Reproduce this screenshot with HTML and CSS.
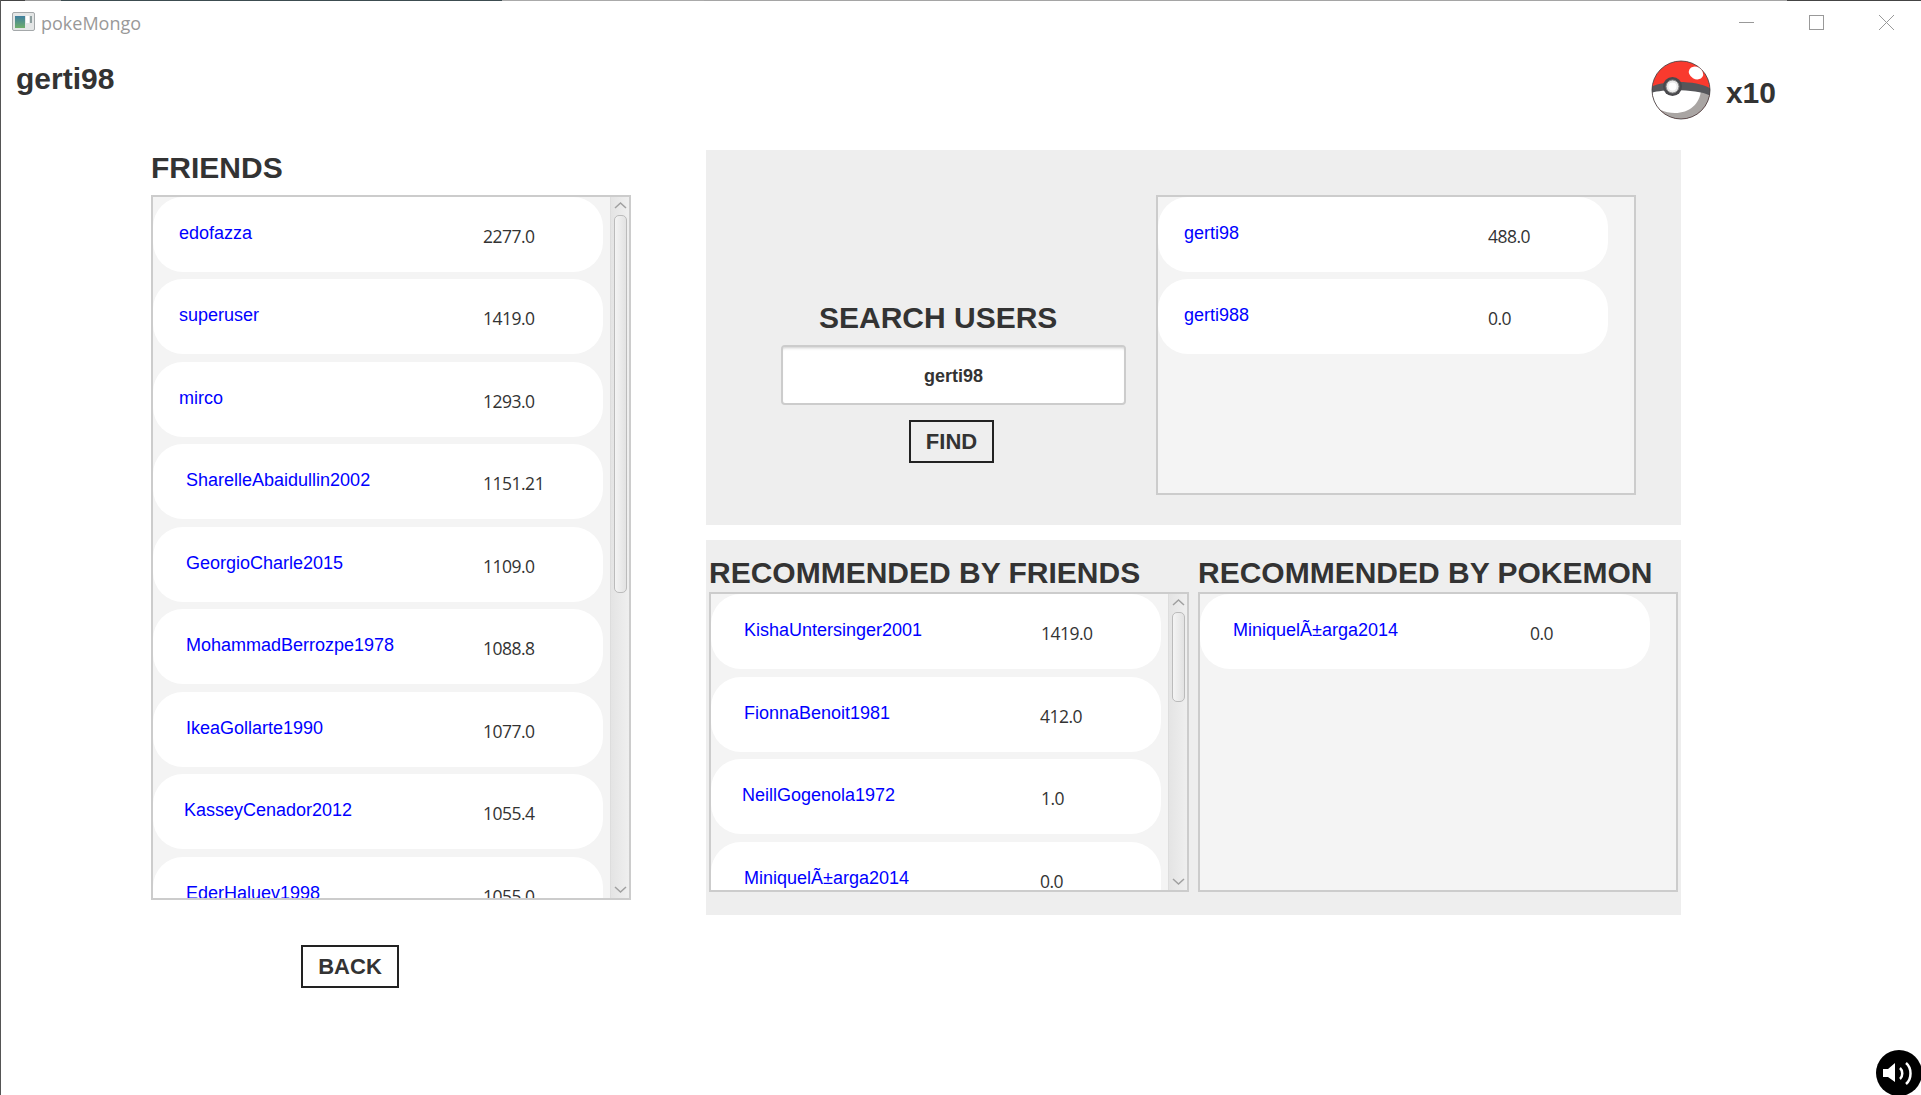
FILE: index.html
```html
<!DOCTYPE html>
<html>
<head>
  <title>pokeMongo</title>
  <link rel="stylesheet" href="styles.css">
</head>
<body>
  <div class="window">
    <div class="topline"></div>
    <div class="titlebar">
      <div class="title">
        <svg class="app-icon" width="23" height="19" viewBox="0 0 23 19">
          <defs>
            <linearGradient id="iconFill" x1="0" y1="0" x2="0" y2="1">
              <stop offset="0" stop-color="#3f7fa0"/>
              <stop offset="1" stop-color="#6fae6a"/>
            </linearGradient>
          </defs>
          <rect x="0.5" y="0.5" width="22" height="18" rx="1.5" fill="#e4e6e6" stroke="#a4a8aa"/>
          <rect x="3" y="4" width="10" height="12" fill="url(#iconFill)"/>
          <rect x="14" y="4" width="3" height="7" fill="#ffffff"/>
          <rect x="18" y="4" width="2" height="7" fill="#8fa0a0"/>
        </svg>
        <span>pokeMongo</span>
      </div>
      <div class="controls">
        <div class="control">
          <svg width="15" height="15" viewBox="0 0 15 15"><path d="M0 7.5H15" stroke="#999" fill="none"/></svg>
        </div>
        <div class="control">
          <svg width="15" height="15" viewBox="0 0 15 15"><rect x="0.5" y="0.5" width="14" height="14" stroke="#999" fill="none"/></svg>
        </div>
        <div class="control">
          <svg width="15" height="15" viewBox="0 0 15 15"><path d="M0 0L15 15M15 0L0 15" stroke="#999" fill="none"/></svg>
        </div>
      </div>
    </div>

    <div class="header">
      <div class="username">gerti98</div>
      <div class="balance">
        <svg width="60" height="60" viewBox="0 0 60 60">
          <defs>
            <clipPath id="ballClip"><circle cx="30" cy="30" r="29"/></clipPath>
          </defs>
          <g clip-path="url(#ballClip)">
            <rect width="60" height="60" fill="#f93a2e"/>
            <rect y="30" width="60" height="30" fill="#a9a5a3"/>
            <path d="M0 30H50C49 44 38 53 24 53C12 53 2 48 0 38Z" fill="#ffffff"/>
            <path d="M0 27C12 20 48 20 60 29V36C48 29 12 29 0 33Z" fill="#55565a"/>
          </g>
          <circle cx="30" cy="30" r="29" fill="none" stroke="#3c3a3c" stroke-width="0.8"/>
          <ellipse cx="45" cy="13" rx="7.5" ry="6" transform="rotate(30 45 13)" fill="#ffffff"/>
          <circle cx="21.5" cy="26.5" r="9.5" fill="#49494d"/>
          <circle cx="21.5" cy="26.5" r="6.5" fill="#e8e8e8" stroke="#888"/>
          <circle cx="21.5" cy="26.5" r="4" fill="#ffffff"/>
        </svg>
        <span class="count">x10</span>
      </div>
    </div>

    <div class="main">
      <div class="friends-col">
        <h2>FRIENDS</h2>
        <div class="list list-friends">
          <div class="rows">
            <div class="row"><span class="name">edofazza</span><span class="score">2277.0</span></div>
            <div class="row"><span class="name">superuser</span><span class="score">1419.0</span></div>
            <div class="row"><span class="name">mirco</span><span class="score">1293.0</span></div>
            <div class="row"><span class="name far">SharelleAbaidullin2002</span><span class="score">1151.21</span></div>
            <div class="row"><span class="name far">GeorgioCharle2015</span><span class="score">1109.0</span></div>
            <div class="row"><span class="name far">MohammadBerrozpe1978</span><span class="score">1088.8</span></div>
            <div class="row"><span class="name far">IkeaGollarte1990</span><span class="score">1077.0</span></div>
            <div class="row"><span class="name mid">KasseyCenador2012</span><span class="score">1055.4</span></div>
            <div class="row"><span class="name far">EderHaluev1998</span><span class="score">1055.0</span></div>
          </div>
          <div class="scrollbar">
            <svg class="arrow" width="19" height="18" viewBox="0 0 19 18"><path d="M4 11L9.5 6L15 11" stroke="#a0a0a0" stroke-width="1.5" fill="none"/></svg>
            <div class="thumb thumb-friends"></div>
            <svg class="arrow arrow-down" width="19" height="18" viewBox="0 0 19 18"><path d="M4 7L9.5 12L15 7" stroke="#a0a0a0" stroke-width="1.5" fill="none"/></svg>
          </div>
        </div>
        <button class="btn btn-back">BACK</button>
      </div>

      <div class="right-col">
        <div class="panel panel-search">
          <div class="search-form">
            <h2 class="search-title">SEARCH USERS</h2>
            <input class="search-input" type="text" value="gerti98">
            <button class="btn btn-find">FIND</button>
          </div>
          <div class="list list-results">
            <div class="rows">
              <div class="row"><span class="name">gerti98</span><span class="score">488.0</span></div>
              <div class="row"><span class="name">gerti988</span><span class="score">0.0</span></div>
            </div>
          </div>
        </div>

        <div class="panel panel-recommended">
          <div class="rec-col">
            <h2>RECOMMENDED BY FRIENDS</h2>
            <div class="list list-rec">
              <div class="rows">
                <div class="row"><span class="name far">KishaUntersinger2001</span><span class="score">1419.0</span></div>
                <div class="row"><span class="name far">FionnaBenoit1981</span><span class="score back">412.0</span></div>
                <div class="row"><span class="name mid">NeillGogenola1972</span><span class="score">1.0</span></div>
                <div class="row"><span class="name far">MiniquelÃ±arga2014</span><span class="score back">0.0</span></div>
              </div>
              <div class="scrollbar">
                <svg class="arrow" width="19" height="18" viewBox="0 0 19 18"><path d="M4 11L9.5 6L15 11" stroke="#a0a0a0" stroke-width="1.5" fill="none"/></svg>
                <div class="thumb thumb-rec"></div>
                <svg class="arrow arrow-down" width="19" height="18" viewBox="0 0 19 18"><path d="M4 7L9.5 12L15 7" stroke="#a0a0a0" stroke-width="1.5" fill="none"/></svg>
              </div>
            </div>
          </div>
          <div class="rec-col">
            <h2>RECOMMENDED BY POKEMON</h2>
            <div class="list list-rec">
              <div class="rows">
                <div class="row"><span class="name far">MiniquelÃ±arga2014</span><span class="score">0.0</span></div>
              </div>
            </div>
          </div>
        </div>
      </div>
    </div>

    <div class="sound">
      <svg width="45" height="45" viewBox="0 0 45 45">
        <circle cx="23" cy="23" r="23" fill="#000"/>
        <path d="M7 19H12L19 13V32L12 27H7Z" fill="#fff"/>
        <path d="M24 18C27 20.5 27 26.5 24 29M30 13C36 18 36 29 30 34" stroke="#fff" stroke-width="2.5" fill="none"/>
      </svg>
    </div>
  </div>
</body>
</html>
```

FILE: styles.css
```css
* {
  box-sizing: border-box;
}

html, body {
  margin: 0;
  padding: 0;
  height: 100%;
  overflow: hidden;
  background: #fff;
}

body {
  font-family: "Liberation Sans", Arial, sans-serif;
  color: #333;
}

h2 {
  margin: 0;
  font-size: 30px;
  line-height: 36px;
  font-weight: bold;
  white-space: nowrap;
}

.window {
  position: relative;
  height: 1095px;
  border-left: 1px solid #555;
  overflow: hidden;
}

/* whatever was behind the window shows through along the top edge */
.topline {
  height: 1px;
  background: linear-gradient(90deg, #444 0 24px, #999 24px 60px, #3c4c50 60px 501px, #aaa 501px 703px, #a5a5a5 703px 1786px, #444 1786px);
}

/* title bar */
.titlebar {
  display: flex;
  justify-content: space-between;
  height: 35px;
  padding-top: 11px;
}

.title {
  display: flex;
  align-items: center;
  gap: 6px;
  height: 19px;
  margin-left: 11px;
  font-family: "Open Sans", sans-serif;
  font-size: 18px;
  color: #999;
}

.title span {
  padding-top: 2px;
}

.controls {
  display: flex;
  margin-top: 3px;
}

.control {
  display: flex;
  justify-content: center;
  width: 70px;
}

/* user + pokeballs */
.header {
  display: flex;
  justify-content: space-between;
  height: 114px;
}

.username {
  margin: 25px 0 0 15px;
  font-size: 30px;
  line-height: 36px;
  font-weight: bold;
}

.balance {
  display: flex;
  gap: 15px;
  height: 60px;
  margin: 24px 145px 0 0;
}

.count {
  padding-top: 15px;
  font-size: 30px;
  line-height: 36px;
  font-weight: bold;
}

/* page columns */
.main {
  display: flex;
  gap: 75px;
  padding-left: 150px;
}

.friends-col {
  width: 480px;
}

.friends-col h2 {
  margin-bottom: 9px;
}

.right-col {
  display: flex;
  flex-direction: column;
  gap: 15px;
  width: 975px;
}

.panel {
  display: flex;
  height: 375px;
  background: #eee;
}

.panel-search {
  gap: 30px;
  padding: 45px 0 0 75px;
}

.panel-recommended {
  gap: 9px;
  padding: 15px 0 0 3px;
}

/* lists */
.list {
  display: flex;
  border: 2px solid #ccc;
  background: #f4f4f4;
  overflow: hidden;
}

.list-friends {
  width: 480px;
  height: 705px;
}

.list-results {
  width: 480px;
  height: 300px;
}

.list-rec {
  width: 480px;
  height: 300px;
}

.rows {
  display: flex;
  flex-direction: column;
  flex: 1;
  gap: 7.5px;
  overflow: hidden;
}

.list-friends .rows,
.list-results .rows {
  margin-top: -0.5px;
}

.row {
  display: flex;
  flex: none;
  width: 450px;
  height: 75px;
  padding-top: 26px;
  border-radius: 30px;
  background: #fff;
}

.name {
  width: 330px;
  padding-left: 26px;
  font-size: 18px;
  line-height: 20px;
  color: #00f;
  white-space: nowrap;
}

.name.mid {
  padding-left: 31px;
}

.name.far {
  padding-left: 33px;
}

.score {
  margin-top: 1px;
  font-family: "Open Sans", sans-serif;
  font-size: 17.5px;
  line-height: 24px;
  letter-spacing: -0.5px;
  color: #333;
}

.score.back {
  margin-left: -1px;
}

/* scrollbar */
.scrollbar {
  display: flex;
  flex-direction: column;
  align-items: center;
  flex: none;
  width: 19px;
  border-left: 1px solid #ddd;
  background: linear-gradient(90deg, #e4e4e4, #efefef);
}

.arrow {
  flex: none;
}

.arrow-down {
  margin-top: auto;
}

.thumb {
  width: 13px;
  border: 1px solid #bbb;
  border-radius: 5px;
  background: linear-gradient(90deg, #f4f4f4, #e2e2e2);
}

.thumb-friends {
  height: 378px;
}

.thumb-rec {
  height: 90px;
}

/* search form */
.search-form {
  display: flex;
  flex-direction: column;
  align-items: flex-start;
  width: 345px;
  padding-top: 105px;
}

.search-title {
  margin: 0 0 9px 38px;
}

.search-input {
  width: 345px;
  height: 60px;
  padding-top: 3px;
  border: 2px solid #ccc;
  border-radius: 4px;
  outline: none;
  background: #fff;
  box-shadow: inset 0 3px 3px -2px #ccc;
  font-family: "Liberation Sans", Arial, sans-serif;
  font-size: 18px;
  font-weight: bold;
  color: #333;
  text-align: center;
}

.btn {
  display: block;
  height: 43px;
  padding: 1px 0 0;
  border: 2px solid #222;
  background: transparent;
  font-family: "Liberation Sans", Arial, sans-serif;
  font-size: 22px;
  font-weight: bold;
  color: #333;
}

.btn-find {
  width: 85px;
  margin: 15px 0 0 128px;
}

.btn-back {
  width: 98px;
  margin: 45px 0 0 150px;
}

.rec-col h2 {
  margin: 0 0 1px 0;
}

/* sound button over the corner */
.sound {
  position: absolute;
  right: 0;
  bottom: 0;
  width: 45px;
  height: 45px;
}
```
